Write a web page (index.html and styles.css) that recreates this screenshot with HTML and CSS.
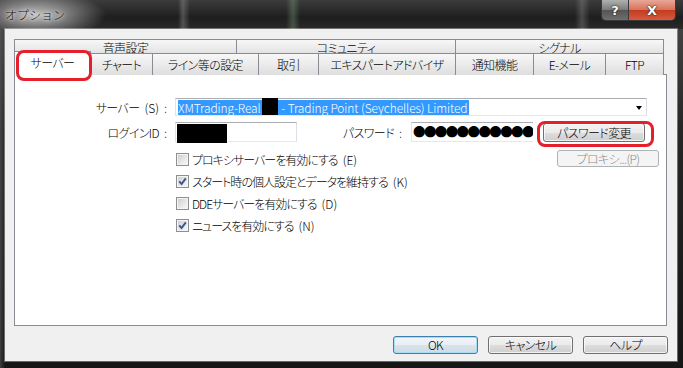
FILE: index.html
```html
<!DOCTYPE html>
<html lang="ja">
  <head>
    <meta charset="UTF-8" />
    <meta name="viewport" content="width=device-width, initial-scale=1.0" />
    <title>オプション</title>
    <link rel="stylesheet" href="styles.css">
  </head>
  <body>
    <div class="window">
      <div class="titlebar">
        <span class="title">オプション</span>
        <div class="caption">
          <span class="capBtn help">?</span>
          <span class="capBtn close">X</span>
        </div>
      </div>

      <div class="client">
        <div class="tabs">
          <div class="tabRow back">
            <div class="tab">音声設定</div>
            <div class="tab">コミュニティ</div>
            <div class="tab">シグナル</div>
          </div>
          <div class="tabRow front">
            <div class="tab sel">サーバー<span class="ring tabRing"></span></div>
            <div class="tab">チャート</div>
            <div class="tab">ライン等の設定</div>
            <div class="tab">取引</div>
            <div class="tab">エキスパートアドバイザ</div>
            <div class="tab">通知機能</div>
            <div class="tab">E-メール</div>
            <div class="tab">FTP</div>
          </div>
        </div>

        <div class="panel">
          <div class="row server">
            <label class="lbl">サーバー<span class="key">(S)</span><span class="key">:</span></label>
            <div class="combo">
              <span class="hilite">XMTrading-Real<span class="mask srv"></span> - Trading Point (Seychelles) Limited</span>
              <span class="arrow"></span>
            </div>
          </div>

          <div class="row login">
            <label class="lbl">ログインID<span class="key">:</span></label>
            <div class="field loginId"><span class="mask id"></span></div>
            <label class="lbl pw">パスワード<span class="key">:</span></label>
            <div class="field pass">●●●●●●●●●●●</div>
            <div class="marked">
              <button class="btn">パスワード変更</button>
              <span class="ring btnRing"></span>
            </div>
          </div>

          <div class="lower">
            <div class="checks">
              <label class="check"><span class="box"></span>プロキシサーバーを有効にする<span class="key">(E)</span></label>
              <label class="check"><span class="box on"><svg viewBox="0 0 13 13" width="13" height="13"><path d="M3.2 6.4 L5.6 9 L9.8 3.4" /></svg></span>スタート時の個人設定とデータを維持する<span class="key">(K)</span></label>
              <label class="check"><span class="box"></span>DDEサーバーを有効にする<span class="key">(D)</span></label>
              <label class="check"><span class="box on"><svg viewBox="0 0 13 13" width="13" height="13"><path d="M3.2 6.4 L5.6 9 L9.8 3.4" /></svg></span>ニュースを有効にする<span class="key">(N)</span></label>
            </div>
            <button class="btn proxy" disabled>プロキシ...(P)</button>
          </div>
        </div>

        <div class="actions">
          <button class="btn default">OK</button>
          <button class="btn">キャンセル</button>
          <button class="btn">ヘルプ</button>
        </div>
      </div>
    </div>
  </body>
</html>
```

FILE: styles.css
```css
* {
  box-sizing: border-box;
}
html,
body {
  margin: 0;
}
body {
  background: #111;
  font-family: 'Noto Sans CJK JP', 'Liberation Sans', sans-serif;
  font-size: 12px;
  font-weight: 300;
  font-feature-settings: 'palt';
  letter-spacing: -0.6px;
  color: #000;
}
.window {
  width: 683px;
  height: 368px;
  display: flex;
  flex-direction: column;
  background:
    linear-gradient(90deg, rgba(90, 90, 90, 0.6) 0, rgba(0, 0, 0, 0) 5px),
    linear-gradient(#4a4a4a, #262626 35%, #161616);
}

/* title bar */
.titlebar {
  height: 29px;
  flex: none;
  display: flex;
  justify-content: space-between;
  align-items: flex-start;
  padding: 0 7px 0 5px;
  background:
    radial-gradient(ellipse 70px 24px at 36px 15px, rgba(205, 205, 205, 0.95), rgba(205, 205, 205, 0)),
    linear-gradient(90deg, transparent 178px, rgba(170, 170, 170, 0.35) 183px, transparent 190px),
    linear-gradient(90deg, transparent 286px, rgba(150, 190, 150, 0.3) 293px, transparent 300px),
    linear-gradient(90deg, transparent 575px, rgba(170, 170, 170, 0.3) 582px, transparent 590px),
    linear-gradient(#3c3c3c, #1e1e1e 60%, #2a2a2a);
}
.title {
  line-height: 30px;
  font-size: 12px;
  font-feature-settings: normal;
  letter-spacing: 0;
  color: #111;
  text-shadow: 0 0 6px #eee, 0 0 3px #fff;
}
.caption {
  display: flex;
  border: 1px solid #3a3a3a;
  border-top: 0;
  border-radius: 0 0 5px 5px;
  overflow: hidden;
}
.capBtn {
  height: 20px;
  display: flex;
  align-items: center;
  justify-content: center;
  color: #fff;
  font-family: 'DejaVu Sans', sans-serif;
  font-weight: bold;
  font-size: 13px;
  letter-spacing: 0;
  text-shadow: 0 0 2px #222, 0 0 1px #000;
}
.help {
  width: 27px;
  border-right: 1px solid #3a3a3a;
  background: linear-gradient(#b0b0b0, #7a7a7a 50%, #555 52%, #6e6e6e);
}
.close {
  width: 46px;
  background: linear-gradient(#e9a797, #d7705a 50%, #c23d20 52%, #d65a3e);
}

/* client area */
.client {
  flex: 1;
  margin: 0 6px 7px 5px;
  padding: 10px 10px 0 9px;
  background: #f0f0f0;
  box-shadow: 0 0 0 1px rgba(255, 255, 255, 0.35);
}
.tabRow {
  display: grid;
  width: 650px;
  text-align: center;
}
.back {
  grid-template-columns: 222px 219px 209px;
  height: 15px;
  line-height: 16px;
}
.front {
  grid-template-columns: 76px 62px 106px 60px 137px 78px 72px 59px;
  height: 21px;
  line-height: 21px;
  margin-top: -1px;
}
.tab {
  border: 1px solid #898c95;
  border-right: 0;
  border-bottom: 0;
  background: linear-gradient(#f7f7f7, #ebebeb 50%, #dedede);
  white-space: nowrap;
}
.tab:last-child {
  border-right: 1px solid #898c95;
}
.tab.sel {
  position: relative;
  z-index: 2;
  margin: -2px -1px -1px 0;
  border-right: 1px solid #898c95;
  background: #fff;
  line-height: 22px;
}
.ring {
  position: absolute;
  border: 3px solid #e3202b;
  border-radius: 8px;
  pointer-events: none;
}
.tabRing {
  left: 1px;
  top: -2px;
  width: 76px;
  height: 31px;
}

/* panel */
.panel {
  width: 653px;
  height: 252px;
  border: 1px solid #898c95;
  background: #fff;
  padding-top: 23px;
}
.row {
  display: flex;
  align-items: center;
}
.lbl {
  width: 160px;
  padding-right: 8px;
  text-align: right;
  white-space: nowrap;
}
.key {
  margin-left: 5px;
  letter-spacing: 0;
}
.combo {
  position: relative;
  width: 472px;
  height: 18px;
  padding: 1px 2px;
  border: 1px solid;
  border-color: #abadb3 #dbdfe6 #e3e9ef #e2e3ea;
}
.hilite {
  display: inline-block;
  height: 15px;
  line-height: 15px;
  padding-right: 2px;
  background: #3399ff;
  color: #fff;
  letter-spacing: -0.1px;
  vertical-align: top;
}
.mask {
  display: inline-block;
  background: #000;
}
.mask.srv {
  width: 16px;
  height: 17px;
  margin: -2px 1px 0 1px;
  vertical-align: top;
}
.arrow {
  position: absolute;
  right: 4px;
  top: 7px;
  border-left: 3.5px solid transparent;
  border-right: 3.5px solid transparent;
  border-top: 4px solid #000;
}
.login {
  margin-top: 6px;
  height: 20px;
}
.field {
  height: 20px;
  border: 1px solid;
  border-color: #abadb3 #dbdfe6 #e3e9ef #e2e3ea;
}
.loginId {
  width: 122px;
  padding: 1px;
}
.mask.id {
  width: 50px;
  height: 19px;
}
.lbl.pw {
  width: 114px;
  padding-right: 9px;
}
.pass {
  width: 122px;
  border-right: 0;
  overflow: hidden;
  white-space: nowrap;
  padding-left: 1px;
  line-height: 18px;
  font-size: 12.5px;
  font-weight: 400;
  letter-spacing: -1.6px;
}
.marked {
  position: relative;
  margin-left: 10px;
  align-self: flex-start;
  margin-top: 1px;
}
.btnRing {
  left: -6px;
  top: -2px;
  right: -9px;
  bottom: -5px;
}

/* buttons */
.btn {
  display: block;
  width: 102px;
  height: 19px;
  padding: 0;
  font: inherit;
  font-feature-settings: 'palt';
  letter-spacing: -0.6px;
  color: #000;
  border: 1px solid #707070;
  border-radius: 3px;
  background: linear-gradient(#f2f2f2, #ebebeb 50%, #dddddd 51%, #cfcfcf);
  box-shadow: inset 0 0 0 1px rgba(255, 255, 255, 0.7);
}
.btn:disabled {
  border-color: #adb2b5;
  background: #f4f4f4;
  color: #8a8a8a;
  box-shadow: none;
}
.btn.default {
  border-color: #3c7fb1;
  box-shadow: inset 0 0 0 1px #a9dcf5;
  background: linear-gradient(#f0f5f9, #e8eef3 50%, #d8e4ec 51%, #cddbe4);
}

/* lower part */
.lower {
  display: flex;
  align-items: flex-start;
  margin-top: 8px;
}
.checks {
  width: 367px;
  margin-left: 161px;
  margin-top: 3px;
  display: flex;
  flex-direction: column;
  gap: 9px;
}
.check {
  display: flex;
  align-items: center;
  height: 13px;
  line-height: 13px;
  white-space: nowrap;
  letter-spacing: -1px;
}
.box {
  width: 13px;
  height: 13px;
  flex: none;
  margin-right: 3px;
  border: 1px solid #8e8f8f;
  background: linear-gradient(135deg, #c9ccd2, #eeeeee 70%, #f6f6f6);
  box-shadow: inset 0 0 0 1px #f4f4f4;
}
.box svg {
  display: block;
  margin: -1px;
}
.box path {
  fill: none;
  stroke: #3d5793;
  stroke-width: 2;
}
.proxy {
  margin-left: 14px;
  height: 17px;
  line-height: 15px;
}

.actions {
  display: flex;
  justify-content: flex-end;
  gap: 10px;
  margin: 10px -1px 0 0;
}
.actions .btn {
  width: 85px;
  height: 18px;
  line-height: 16px;
}
```
